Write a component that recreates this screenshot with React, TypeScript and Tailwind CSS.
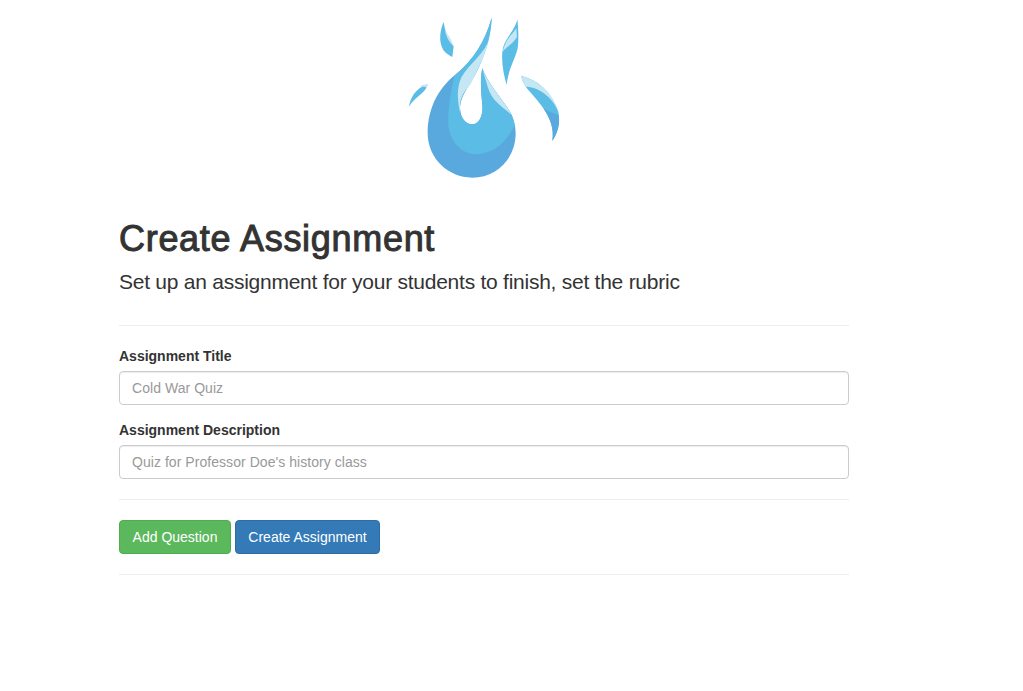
import React from 'react';

const Logo = () => (
    <svg width="180" height="185" viewBox="0 0 540 555" className="block">
        {/* drop */}
        <path
            fill="#5aa9de"
            d="M290 38 C270 110 235 165 180 210 C130 250 98 310 98 385 C98 460 160 518 232 518 C305 518 362 460 362 385 C362 360 355 338 345 320 C315 275 275 230 262 190 C255 220 258 260 262 300 C265 335 250 358 232 358 C210 358 194 335 195 305 C197 270 225 240 245 200 C265 160 288 100 290 38 Z"
        />
        <path
            fill="#5bbce6"
            d="M290 38 C270 110 235 165 178 212 C168 260 158 310 160 360 C165 410 200 447 242 447 C295 447 335 410 359 362 C356 345 352 332 345 320 C315 275 275 230 262 190 C255 220 258 260 262 300 C265 335 250 358 232 358 C210 358 194 335 195 305 C197 270 225 240 245 200 C265 160 288 100 290 38 Z"
        />
        {/* pale highlights */}
        <path
            fill="#c5e6f3"
            d="M283 100 C270 145 225 175 200 215 C185 245 186 285 196 325 C192 290 197 270 225 240 C232 228 238 214 245 200 C262 168 276 130 283 100 Z"
        />
        <path
            fill="#c5e6f3"
            d="M262 190 C275 230 315 275 345 320 L350 330 C325 305 290 290 278 245 C272 225 266 205 262 190 Z"
        />
        {/* left leaf */}
        <path fill="#5bbce6" d="M146 50 C135 75 130 110 145 135 C155 148 165 152 172 156 L176 124 C160 105 150 80 146 50 Z" />
        <path fill="#c5e6f3" d="M150 75 C152 90 160 110 175 122 C170 105 160 90 150 75 Z" />
        {/* small leaf */}
        <path fill="#5bbce6" d="M42 305 C46 280 60 250 98 238 C95 262 60 275 42 305 Z" />
        <path fill="#c5e6f3" d="M70 246 C80 240 90 238 98 238 L96 248 C88 244 78 244 70 246 Z" />
        {/* right leaf */}
        <path fill="#5bbce6" d="M367 42 C360 75 335 95 325 125 C316 160 325 205 335 240 C340 190 360 165 368 130 C372 100 370 70 367 42 Z" />
        <path fill="#c5e6f3" d="M364 70 C350 90 330 105 323 140 C335 125 355 115 366 95 Z" />
        {/* far right flame */}
        <path fill="#5bbce6" d="M378 212 C385 250 420 270 445 310 C465 340 478 370 472 408 C490 380 496 350 490 320 C470 260 430 225 378 212 Z" />
        <path fill="#5aa9de" d="M445 310 C465 340 478 370 472 408 C490 380 496 350 490 330 C475 325 460 320 445 310 Z" />
        <path fill="#c5e6f3" d="M378 212 C380 225 385 235 392 245 C430 245 470 275 490 318 C470 260 430 225 378 212 Z" />
    </svg>
);

const Field = ({ label, placeholder }: { label: string; placeholder: string }) => (
    <div className="mb-[15px]">
        <label className="block mb-[5px] text-[14px] leading-[20px] font-bold text-[#333]">{label}</label>
        <input
            type="text"
            placeholder={placeholder}
            className="block w-full h-[34px] px-3 py-1.5 text-[14px] leading-[20px] tracking-[0.05px] text-[#555] bg-white border border-[#ccc] rounded shadow-[inset_0_1px_1px_rgba(0,0,0,0.075)] placeholder:text-[#999] outline-none"
        />
    </div>
);

export default function App() {
    return (
        <div className="min-h-screen bg-white font-['Liberation_Sans',Arial,sans-serif] text-[#333]">
            <div className="w-[730px] ml-[119px]">
                <div className="flex justify-center pt-[5px] pl-[2px]">
                    <Logo />
                </div>
                <h1 className="mt-[29px] mb-0 text-[36px] leading-[40px] font-normal tracking-[0.7px] [-webkit-text-stroke:1px_#333] text-[#333]">Create Assignment</h1>
                <p className="mt-[8px] text-[21px] leading-[30px] font-light tracking-[-0.25px] text-[#333]">
                    Set up an assignment for your students to finish, set the rubric
                </p>
                <hr className="mt-[28px] mb-[20px] border-[#eee]" />
                <Field label="Assignment Title" placeholder="Cold War Quiz" />
                <Field label="Assignment Description" placeholder="Quiz for Professor Doe's history class" />
                <hr className="mt-[20px] mb-[20px] border-[#eee]" />
                <div className="flex gap-1">
                    <button className="w-[112px] h-[34px] text-[14px] text-white bg-[#5cb85c] border border-[#4cae4c] rounded">
                        Add Question
                    </button>
                    <button className="w-[145px] h-[34px] text-[14px] text-white bg-[#337ab7] border border-[#2e6da4] rounded">
                        Create Assignment
                    </button>
                </div>
                <hr className="mt-[20px] border-[#eee]" />
            </div>
        </div>
    );
}
